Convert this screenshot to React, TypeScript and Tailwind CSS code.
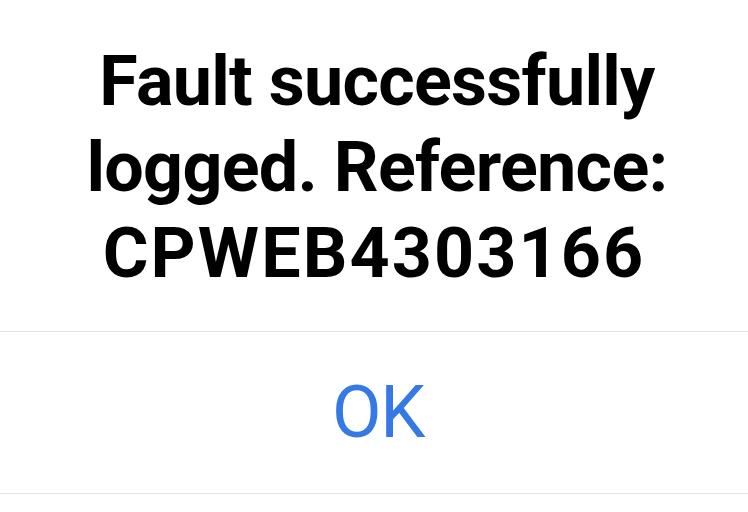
export default function App() {
  return (
    <div className="w-[748px] h-[512px] bg-white overflow-hidden font-['Roboto',sans-serif]">
      <div className="pt-[38px] pb-[35px] px-4">
        <h1 className="text-center text-black font-bold text-[70px] leading-[86px] tracking-[-0.01em]">
          <span className="relative left-[3px]">Fault successfully</span>
          <br />
          <span className="relative left-[3px]">logged. Reference:</span>
          <br />
          <span className="tracking-[0.03em]">CPWEB4303166</span>
        </h1>
      </div>
      <div className="border-t border-[#e3e3e3] h-[162px] flex items-center justify-center">
        <button className="text-[#3579e6] text-[72px] leading-none font-normal tracking-[-0.02em] pl-[8px]">
          OK
        </button>
      </div>
      <div className="border-t border-[#e3e3e3]" />
    </div>
  );
}
